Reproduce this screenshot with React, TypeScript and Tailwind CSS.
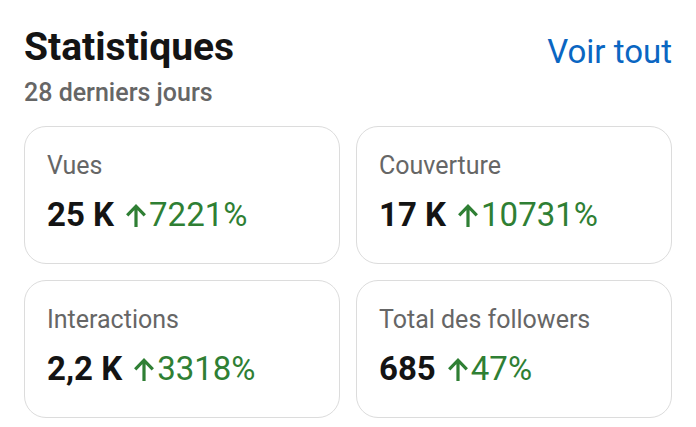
import React from 'react';

const stats = [
  { label: 'Vues', value: '25 K', delta: '7221%' },
  { label: 'Couverture', value: '17 K', delta: '10731%' },
  { label: 'Interactions', value: '2,2 K', delta: '3318%' },
  { label: 'Total des followers', value: '685', delta: '47%' },
];

function ArrowUp() {
  return (
    <svg width="20" height="24" viewBox="0 0 20 24" className="mr-[3px] shrink-0">
      <path d="M10 24V3.5M1.2 12.3L10 3.2L18.8 12.3" fill="none" stroke="#2f7f34" strokeWidth="3.2" />
    </svg>
  );
}

export default function App() {
  return (
    <div className="w-[696px] h-[427px] bg-white px-6 pt-6 font-['Roboto',sans-serif] overflow-hidden">
      {/* Header */}
      <div className="flex items-start justify-between">
        <div>
          <h1 className="text-[39px] leading-[46px] font-bold text-[#141414]">Statistiques</h1>
          <p className="text-[25px] leading-[30px] font-medium text-[#666] mt-2">28 derniers jours</p>
        </div>
        <a className="text-[33px] leading-[40px] text-[#0a66c2] mt-2">Voir tout</a>
      </div>

      {/* Cards */}
      <div className="grid grid-cols-2 gap-4 mt-[18px]">
        {stats.map((s) => (
          <div key={s.label} className="h-[138px] rounded-[22px] border border-[#dcdcdc] px-[22px] pt-6">
            <p className="text-[25px] leading-[30px] text-[#666]">{s.label}</p>
            <div className="flex items-center mt-4 leading-[36px]">
              <span className="text-[33px] font-bold text-[#141414]">{s.value}</span>
              <span className="ml-3 flex items-center text-[33px] text-[#2f7f34]">
                <ArrowUp />
                {s.delta}
              </span>
            </div>
          </div>
        ))}
      </div>
    </div>
  );
}
